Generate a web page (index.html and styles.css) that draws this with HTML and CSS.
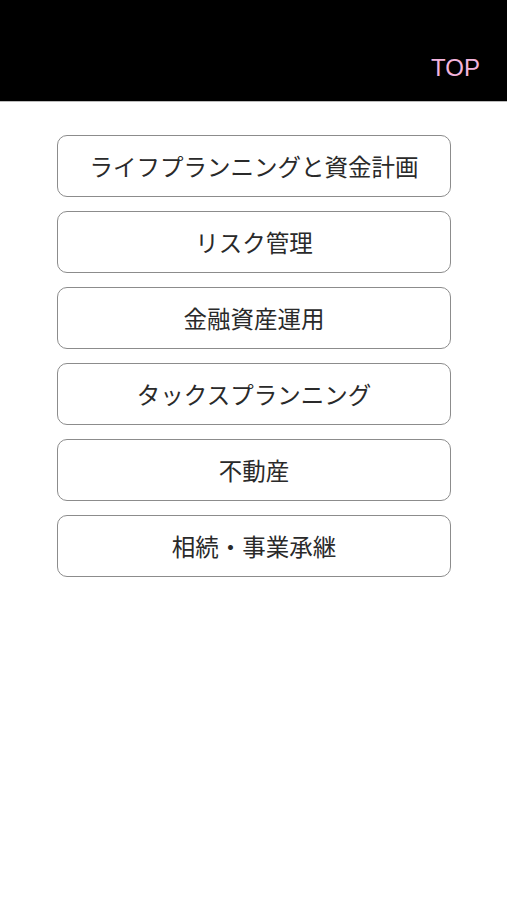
FILE: index.html
```html
<!DOCTYPE html>
<html lang="ja">
<head>
    <meta charset="UTF-8">
    <meta name="viewport" content="width=device-width, initial-scale=1.0">
    <title>TOP</title>
    <link rel="stylesheet" href="styles.css">
</head>
<body>
    <header class="top-bar">
        <span class="top-title">TOP</span>
    </header>
    <main class="menu">
        <a class="menu-item" href="#">ライフプランニングと資金計画</a>
        <a class="menu-item" href="#">リスク管理</a>
        <a class="menu-item" href="#">金融資産運用</a>
        <a class="menu-item" href="#">タックスプランニング</a>
        <a class="menu-item" href="#">不動産</a>
        <a class="menu-item" href="#">相続・事業承継</a>
    </main>
</body>
</html>
```

FILE: styles.css
```css
body {
    margin: 0;
    padding: 0;
    background-color: #fff;
    font-family: "Noto Sans CJK JP", "Noto Sans", sans-serif;
}
.top-bar {
    height: 102px;
    background-color: #000;
    border-bottom: 1px solid #bbb;
    display: flex;
    align-items: center;
    justify-content: flex-end;
    padding-right: 27px;
    box-sizing: border-box;
}
.top-title {
    color: #f2b3dc;
    font-family: "Liberation Sans", Arial, sans-serif;
    font-size: 24px;
    margin-top: 34px;
}
.menu {
    display: flex;
    flex-direction: column;
    gap: 14px;
    padding: 33px 56px 0 57px;
}
.menu-item {
    height: 62px;
    box-sizing: border-box;
    border: 1.5px solid #8c8c8c;
    border-radius: 10px;
    display: flex;
    align-items: center;
    justify-content: center;
    color: #2a2a2a;
    font-size: 23.5px;
    text-decoration: none;
}
```
